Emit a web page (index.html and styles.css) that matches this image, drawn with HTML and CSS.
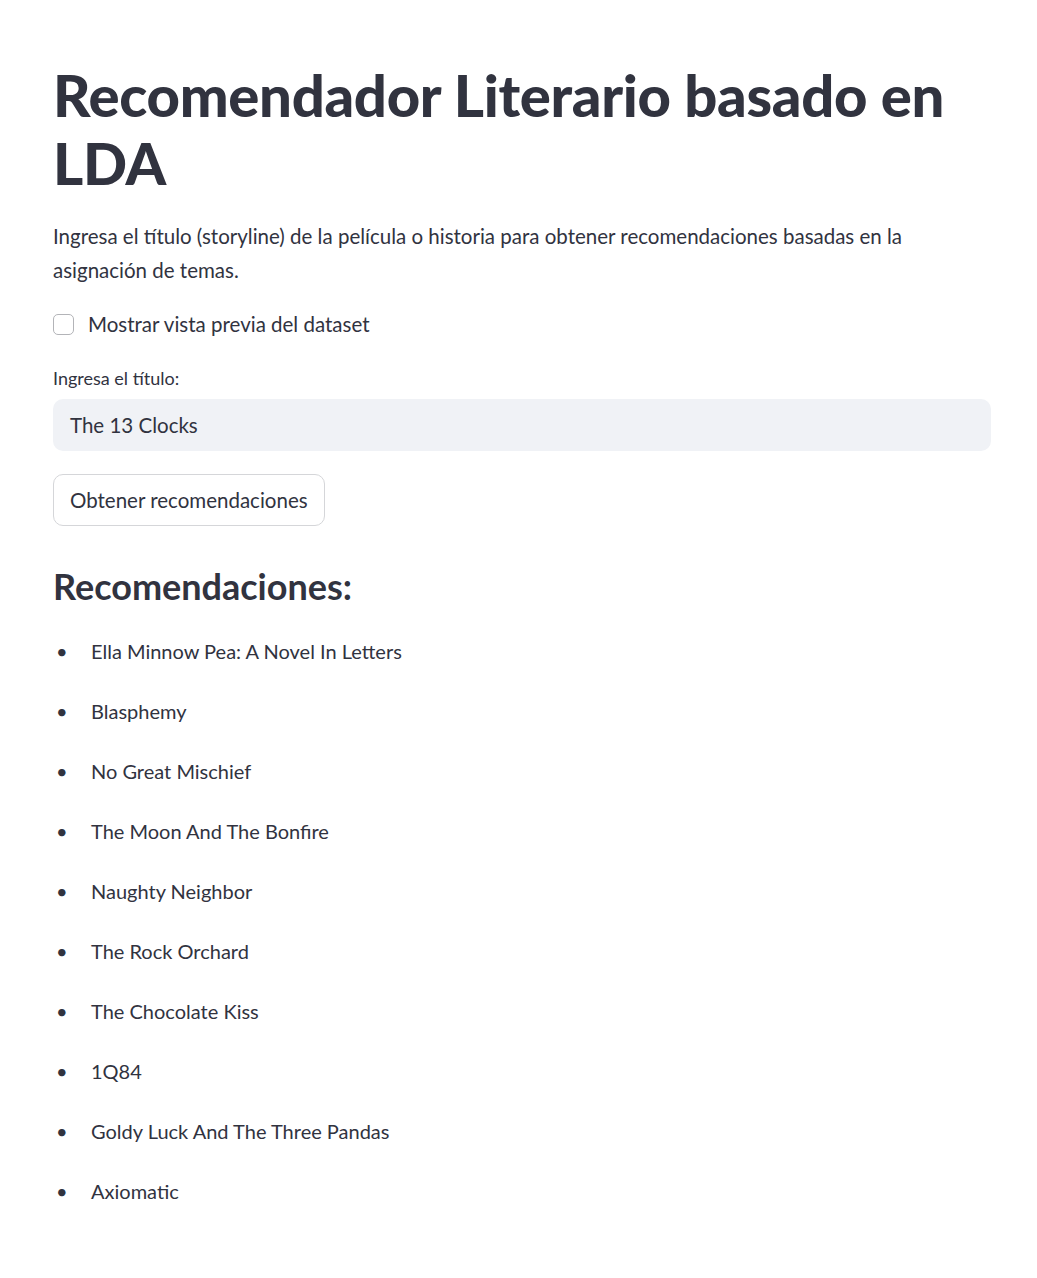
FILE: index.html
```html
<!DOCTYPE html>
<html lang="es">
<head>
<meta charset="utf-8">
<title>Recomendador Literario basado en LDA</title>
<link rel="stylesheet" href="styles.css">
</head>
<body>
<main class="app">
  <h1 class="title">Recomendador Literario basado en LDA</h1>
  <p class="intro">Ingresa el título (storyline) de la película o historia para obtener recomendaciones basadas en la asignación de temas.</p>
  <label class="check-row"><span class="checkbox"></span><span>Mostrar vista previa del dataset</span></label>
  <div class="field">
    <div class="field-label">Ingresa el título:</div>
    <div class="input">The 13 Clocks</div>
  </div>
  <div class="btn-row"><button class="btn">Obtener recomendaciones</button></div>
  <h3 class="subtitle">Recomendaciones:</h3>
  <ul class="recs">
    <li>Ella Minnow Pea: A Novel In Letters</li>
    <li>Blasphemy</li>
    <li>No Great Mischief</li>
    <li>The Moon And The Bonfire</li>
    <li>Naughty Neighbor</li>
    <li>The Rock Orchard</li>
    <li>The Chocolate Kiss</li>
    <li>1Q84</li>
    <li>Goldy Luck And The Three Pandas</li>
    <li>Axiomatic</li>
  </ul>
</main>
</body>
</html>
```
FILE: styles.css
```css
html, body {
  margin: 0;
  padding: 0;
  background: #ffffff;
}
body {
  font-family: "Lato", "Noto Sans", sans-serif;
  color: #31333f;
}
.app {
  width: 938px;
  padding: 61px 0 40px 53px;
  display: flex;
  flex-direction: column;
}
.title {
  margin: 0;
  font-size: 58px;
  line-height: 68px;
  font-weight: 900;
  letter-spacing: -0.3px;
}
.intro {
  margin: 22px 0 0;
  font-size: 20.5px;
  line-height: 34px;
}
.check-row {
  margin-top: 20px;
  height: 34px;
  display: flex;
  align-items: center;
  gap: 14px;
  font-size: 20.5px;
}
.checkbox {
  width: 19px;
  height: 19px;
  border: 1px solid #b3b4b8;
  border-radius: 5px;
  background: #fff;
}
.field {
  margin-top: 25px;
  display: flex;
  flex-direction: column;
  gap: 9px;
}
.field-label {
  font-size: 18px;
  line-height: 24px;
}
.input {
  height: 52px;
  box-sizing: border-box;
  background: #f0f2f6;
  border-radius: 10px;
  padding: 0 17px;
  display: flex;
  align-items: center;
  font-size: 20.5px;
}
.btn-row {
  margin-top: 23px;
  display: flex;
}
.btn {
  height: 52px;
  box-sizing: border-box;
  background: #fff;
  border: 1px solid #d5d6d9;
  border-radius: 10px;
  font-family: inherit;
  font-size: 20.5px;
  color: #31333f;
  padding: 0 16px;
  white-space: nowrap;
}
.subtitle {
  margin: 39px 0 0;
  font-size: 36px;
  line-height: 43px;
  font-weight: 700;
}
.recs {
  margin: 26px 0 0;
  padding: 0;
  list-style: none;
  display: flex;
  flex-direction: column;
  gap: 26px;
}
.recs li {
  font-size: 20px;
  line-height: 34px;
  display: flex;
}
.recs li::before {
  content: "•";
  width: 38px;
  padding-left: 3px;
  box-sizing: border-box;
  flex: none;
}
```
